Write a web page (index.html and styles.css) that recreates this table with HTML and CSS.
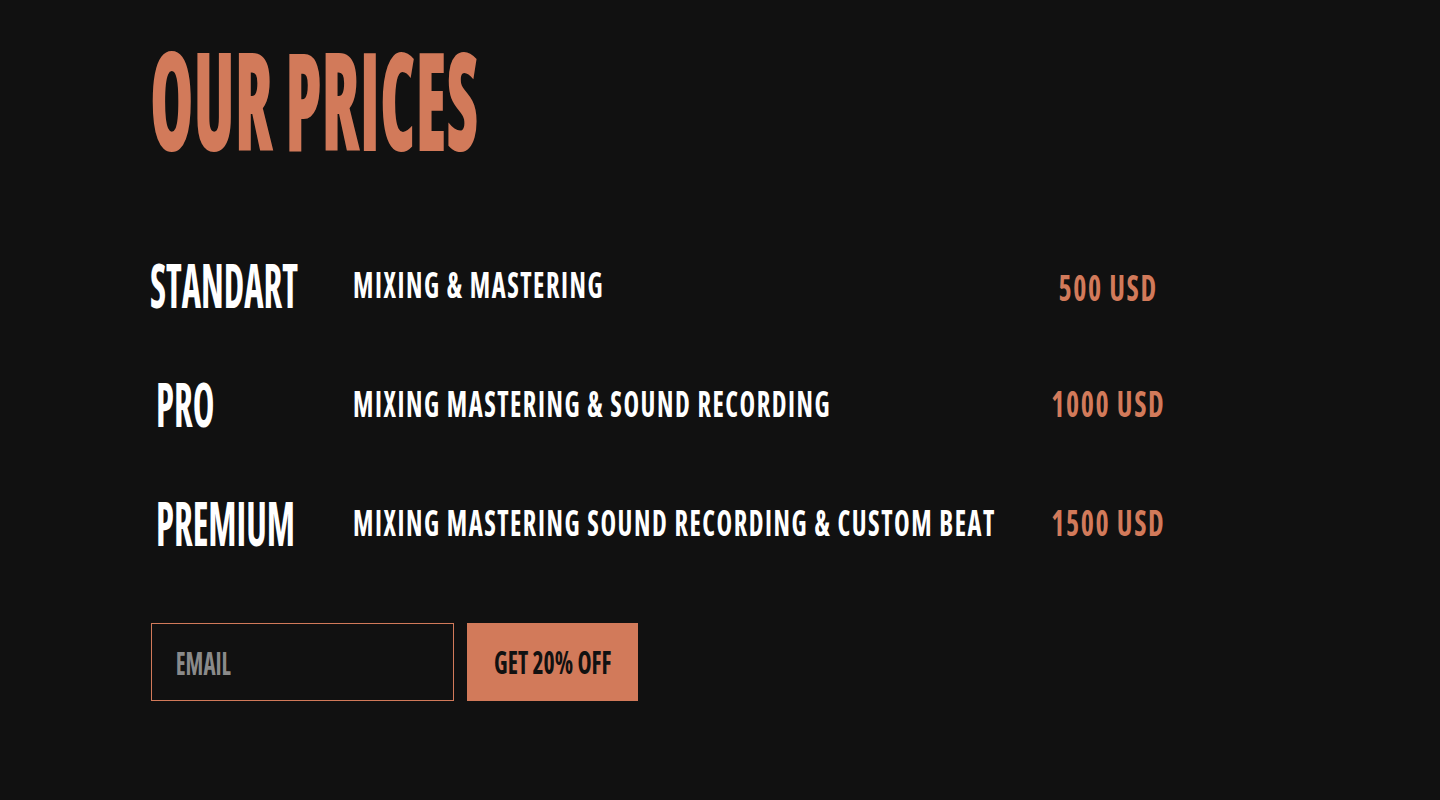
FILE: index.html
```html
<!DOCTYPE html>
<html lang="en">
<head>
<meta charset="utf-8">
<title>Our Prices</title>
<link rel="stylesheet" href="styles.css">
</head>
<body>
<main class="page">
  <h1 class="title"><span class="squeeze">OUR PRICES</span></h1>

  <section class="price-list">
    <div class="price-row price-row-first">
      <div class="plan"><span class="squeeze">STANDART</span></div>
      <div class="desc"><span class="squeeze">MIXING &amp; MASTERING</span></div>
      <div class="cost"><span class="squeeze">500 USD</span></div>
    </div>
    <div class="price-row">
      <div class="plan plan-indent"><span class="squeeze">PRO</span></div>
      <div class="desc"><span class="squeeze">MIXING MASTERING &amp; SOUND RECORDING</span></div>
      <div class="cost"><span class="squeeze">1000 USD</span></div>
    </div>
    <div class="price-row">
      <div class="plan plan-indent"><span class="squeeze">PREMIUM</span></div>
      <div class="desc"><span class="squeeze">MIXING MASTERING SOUND RECORDING &amp; CUSTOM BEAT</span></div>
      <div class="cost"><span class="squeeze">1500 USD</span></div>
    </div>
  </section>

  <form class="offer" onsubmit="return false">
    <label class="field">
      <input class="email" type="email" placeholder="EMAIL">
    </label>
    <button class="cta" type="submit"><span class="squeeze">GET 20% OFF</span></button>
  </form>
</main>
</body>
</html>
```
FILE: styles.css
```css
* { box-sizing: border-box; }

html, body {
  margin: 0;
  background: #111111;
}

body {
  font-family: "Open Sans", "Roboto", sans-serif;
  font-stretch: 75%;
  font-weight: 800;
  color: #ffffff;
}

.page {
  padding: 31px 0 0 150px;
  min-height: 800px;
}

.squeeze {
  display: inline-block;
  white-space: nowrap;
  transform-origin: left center;
}

.title {
  margin: 0;
  font-size: 136px;
  line-height: 1;
  font-weight: 800;
  color: #d27a5a;
  white-space: nowrap;
}
.title .squeeze { transform: scaleX(0.515); }

.price-list {
  margin-top: 58px;
  display: flex;
  flex-direction: column;
}

.price-row {
  display: grid;
  grid-template-columns: 203px 646px 218px;
  align-items: center;
  height: 119px;
}

.plan {
  font-size: 60px;
  line-height: 1;
  font-weight: 700;
  white-space: nowrap;
}
.plan .squeeze { transform: scaleX(0.61); }
.plan-indent { padding-left: 6px; }

.desc {
  font-size: 35px;
  line-height: 1;
  font-weight: 700;
  letter-spacing: 2px;
  white-space: nowrap;
}
.desc .squeeze { transform: scaleX(0.755); }

.cost {
  font-size: 35px;
  line-height: 1;
  font-weight: 700;
  letter-spacing: 2px;
  color: #d27a5a;
  text-align: center;
  white-space: nowrap;
}
.cost .squeeze { transform: scaleX(0.8); transform-origin: center center; }
.price-row-first .cost { padding-top: 6px; }

.offer {
  margin: 41px 0 0 1px;
  display: flex;
  gap: 13px;
}

.field {
  display: block;
  width: 303px;
  height: 78px;
  border: 1px solid #d27a5a;
  overflow: hidden;
}

.email {
  display: block;
  width: 418px;
  height: 76px;
  margin: 0;
  padding: 0 0 0 33px;
  border: 0;
  outline: none;
  background: transparent;
  color: #ffffff;
  font-family: inherit;
  font-stretch: 75%;
  font-weight: 700;
  font-size: 32px;
  transform: scaleX(0.72);
  transform-origin: left center;
}
.email::placeholder {
  color: #8a8a8a;
  opacity: 1;
}

.cta {
  width: 171px;
  height: 78px;
  margin: 0;
  padding: 0;
  border: 0;
  background: #d27a5a;
  color: #111111;
  font-family: inherit;
  font-stretch: 75%;
  font-weight: 700;
  font-size: 32px;
  line-height: 1;
  cursor: pointer;
  overflow: hidden;
}
.cta .squeeze { transform: scaleX(0.745); transform-origin: center center; }
```
